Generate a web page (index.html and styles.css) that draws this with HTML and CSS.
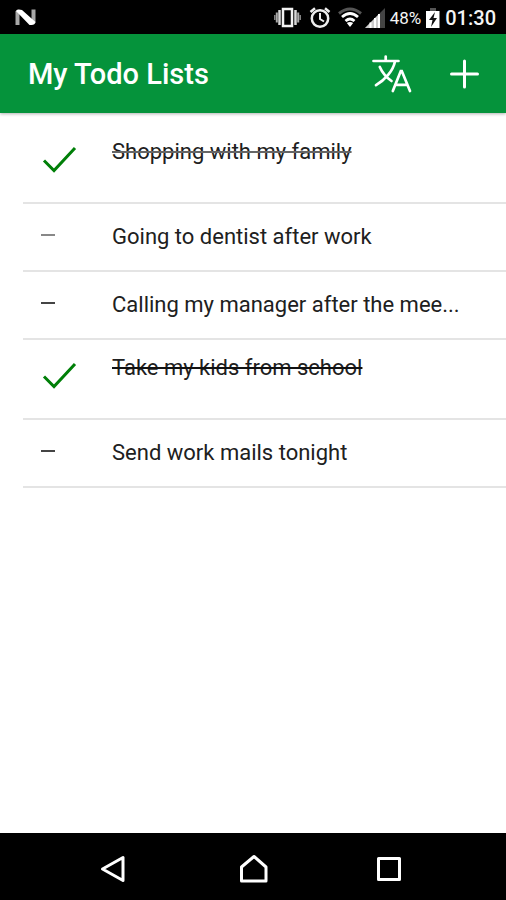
FILE: index.html
```html
<!DOCTYPE html>
<html lang="en">
<head>
<meta charset="utf-8">
<meta name="viewport" content="width=device-width, initial-scale=1">
<title>My Todo Lists</title>
<link rel="stylesheet" href="styles.css">
</head>
<body>
<div class="status-bar">
  <svg class="system-logo" width="22" height="18" viewBox="15 9 22 18" aria-hidden="true">
    <path fill="#a8a8a8" d="M15.500 11h4v14h-4zM31.500 9.500h4v13h-4z"/>
    <path fill="#fff" d="M16 11Q16.500 9 19 9.500L22 10 35.500 22Q35 25 31.500 25L29.500 25z"/>
  </svg>
  <svg width="30" height="24" viewBox="272 6 30 24" aria-hidden="true">
    <rect x="282" y="9" width="9" height="17" fill="none" stroke="#f2f2f2" stroke-width="2.500"/>
    <path d="M278.500 10v15M294.500 10v15" stroke="#d8d8d8" stroke-width="2.500"/>
    <path d="M275.800 12.500v10M297.200 12.500v10" stroke="#aaa" stroke-width="2"/>
    <path d="M273.800 15v5M299.200 15v5" stroke="#888" stroke-width="1.500"/>
  </svg>
  <svg width="24" height="24" viewBox="307 6 24 24" aria-hidden="true" fill="none" stroke="#eee">
    <circle cx="319" cy="18.500" r="8.200" stroke-width="2.500"/>
    <path d="M319 13v6l4 2.500" stroke-width="2"/>
    <path d="M309.500 12l4.500-3.800M328.500 12L324 8.200" stroke-width="2.500"/>
  </svg>
  <svg width="48" height="24" viewBox="337 6 48 24" aria-hidden="true" fill="none">
    <path d="M339 13.500Q350 4.500 361 13.500" stroke="#555" stroke-width="3"/>
    <path d="M342 17Q350 10 358 17M345.500 21Q350 17 354.500 21" stroke="#fff" stroke-width="2.800"/>
    <path d="M346.800 23Q350 21 353.200 23L350 27z" fill="#fff"/>
    <path d="M365 28L385 8v20z" fill="#444"/>
    <path d="M365 28L379 14v14z" fill="#ccc"/>
    <path d="M370.500 22.500V28M375 18v10M379 14v14" stroke="#fff" stroke-width="2"/>
  </svg>
  <span class="battery-level">48%</span>
  <svg width="14" height="24" viewBox="427 5 14 24" aria-hidden="true">
    <path d="M431 7h6v3h-6z" fill="#555"/>
    <path d="M427 10h13.500v17H427z" fill="#fff"/>
    <path d="M436 11l-6 8h3.500l-1.500 7 6-9h-3.500z" fill="#111"/>
  </svg>
  <time class="clock" datetime="01:30">01:30</time>
</div>

<header class="app-bar">
  <h1 class="app-title">My Todo Lists</h1>
  <button class="icon-button" type="button" aria-label="Change language">
    <svg width="44" height="44" viewBox="370 52 44 44" fill="none" stroke="#fff" stroke-width="2.700" stroke-linecap="round">
      <path d="M385.700 56.500v4M373.500 61h25M395 61.500C393 71 385 80 376 85.200M379.800 67C382 72 386.500 77.500 391.500 81"/>
      <path d="M392.800 91L400.800 71h1L410 91M396 84.800h11"/>
    </svg>
  </button>
  <button class="icon-button" type="button" aria-label="Add todo">
    <svg width="44" height="44" viewBox="442 52 44 44" fill="none" stroke="#fff" stroke-width="3" stroke-linecap="round">
      <path d="M464.500 61v26M451.500 74h26"/>
    </svg>
  </button>
</header>

<main class="content">
  <ul class="todo-list">
    <li><label class="todo done soft">
      <input class="todo-check" type="checkbox" checked>
      <svg class="mark" width="36" height="32" viewBox="0 0 36 32" aria-hidden="true"><path d="M3 16.500L13 26.500 34 4" fill="none" stroke="#007f08" stroke-width="3"/></svg>
      <span class="todo-text">Shopping with my family</span>
    </label></li>
    <li><label class="todo soft">
      <input class="todo-check" type="checkbox">
      <svg class="mark" width="36" height="32" viewBox="0 0 36 32" aria-hidden="true"><path d="M0 14h14" stroke="#888" stroke-width="2"/></svg>
      <span class="todo-text">Going to dentist after work</span>
    </label></li>
    <li><label class="todo">
      <input class="todo-check" type="checkbox">
      <svg class="mark" width="36" height="32" viewBox="0 0 36 32" aria-hidden="true"><path d="M0 14h14" stroke="#444" stroke-width="2"/></svg>
      <span class="todo-text">Calling my manager after the mee...</span>
    </label></li>
    <li><label class="todo done">
      <input class="todo-check" type="checkbox" checked>
      <svg class="mark" width="36" height="32" viewBox="0 0 36 32" aria-hidden="true"><path d="M3 16.500L13 26.500 34 4" fill="none" stroke="#007f08" stroke-width="3"/></svg>
      <span class="todo-text">Take my kids from school</span>
    </label></li>
    <li><label class="todo">
      <input class="todo-check" type="checkbox">
      <svg class="mark" width="36" height="32" viewBox="0 0 36 32" aria-hidden="true"><path d="M0 14h14" stroke="#444" stroke-width="2"/></svg>
      <span class="todo-text">Send work mails tonight</span>
    </label></li>
  </ul>
</main>

<nav class="nav-bar" aria-label="System">
  <button class="nav-button" type="button" aria-label="Back">
    <svg width="36" height="36" viewBox="95 851 36 36" fill="none" stroke="#fff" stroke-width="3" stroke-linejoin="round"><path d="M102.500 869L123 857.500v23z"/></svg>
  </button>
  <button class="nav-button" type="button" aria-label="Home">
    <svg width="36" height="36" viewBox="233 851 36 36" fill="none" stroke="#fff" stroke-width="3" stroke-linejoin="round"><path d="M241.500 881V867L254 856.500 266 867v14z"/></svg>
  </button>
  <button class="nav-button" type="button" aria-label="Recent apps">
    <svg width="36" height="36" viewBox="371 851 36 36" fill="none" stroke="#fff" stroke-width="3" stroke-linejoin="round"><path d="M378.500 858.500h21v21h-21z"/></svg>
  </button>
</nav>
</body>
</html>
```
FILE: styles.css
```css
* {
  box-sizing: border-box;
}

body {
  margin: 0;
  min-height: 100vh;
  display: flex;
  flex-direction: column;
  background: #fff;
  color: #202020;
  font-family: Roboto, sans-serif;
}

svg {
  display: block;
  flex: none;
}

button {
  display: grid;
  place-items: center;
  padding: 0;
  border: 0;
  background: none;
}

.status-bar {
  display: flex;
  align-items: center;
  gap: 5px;
  height: 34px;
  padding: 2px 10px 0 15px;
  background: #000;
  color: #f4f4f4;
}

.system-logo {
  margin-right: auto;
}

.battery-level {
  font-size: 17px;
}

.clock {
  font-size: 20px;
  font-weight: 500;
}

.app-bar {
  display: flex;
  align-items: center;
  gap: 28px;
  height: 79px;
  padding: 0 20px 0 28px;
  background: #05933b;
  color: #fff;
  box-shadow: 0 1px 3px rgba(0, 0, 0, 0.3);
}

.app-title {
  flex: 1;
  margin: 0;
  font-size: 29px;
  font-weight: 500;
}

.content {
  flex: 1;
  padding-top: 11px;
}

.todo-list {
  margin: 0;
  padding: 0 0 0 23px;
  list-style: none;
}

.todo {
  display: grid;
  grid-template-columns: 36px 1fr;
  column-gap: 35px;
  align-items: center;
  height: 68px;
  padding: 0 36px 0 18px;
  border-bottom: 2px solid #e4e4e4;
}

.todo.done {
  height: 80px;
  align-items: start;
}

.todo-check {
  grid-area: 1 / 1;
  width: 36px;
  height: 32px;
  margin: 0;
  appearance: none;
}

.mark {
  grid-area: 1 / 1;
}

.done .todo-check,
.done .mark {
  margin-top: 20px;
}

.todo-text {
  grid-area: 1 / 2;
  min-width: 0;
  overflow: hidden;
  font-size: 22px;
  line-height: 28px;
  white-space: nowrap;
  text-overflow: ellipsis;
}

.done .todo-text {
  margin-top: 14px;
  text-decoration: line-through 2px #111;
}

.done.soft .todo-text {
  text-decoration-color: #666;
}

.nav-bar {
  display: grid;
  grid-template-columns: repeat(3, 1fr);
  height: 67px;
  padding: 4px 48px 0 44px;
  background: #000;
}
```
